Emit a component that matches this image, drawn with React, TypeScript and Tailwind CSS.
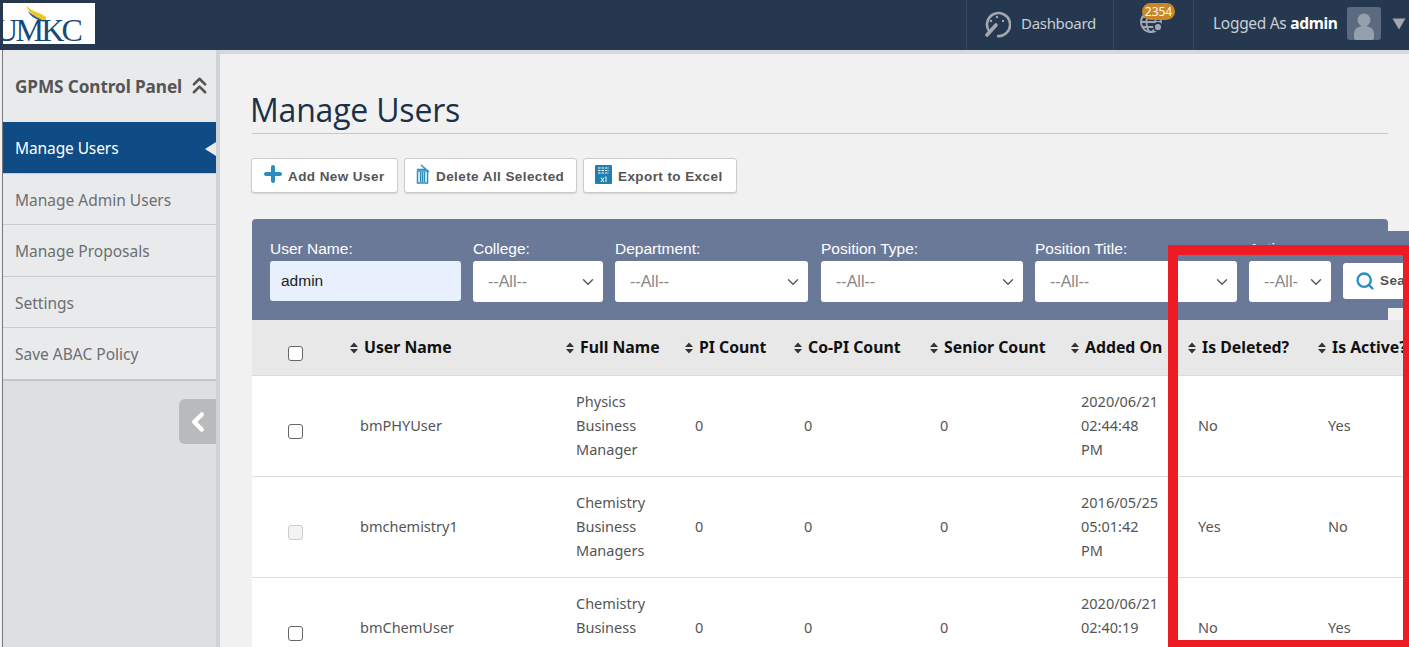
import React from "react";
import { ChevronDown, ChevronLeft, ChevronsUp, Plus, Search } from "lucide-react";

const font = { fontFamily: "Tahoma, 'Noto Sans', 'Open Sans', sans-serif" };
const arial = { fontFamily: "'Liberation Sans', Arial, sans-serif" };

function Sort() {
  return (
    <svg width="8" height="12" viewBox="0 0 8 12" className="shrink-0" fill="#333">
      <path d="M4 0.5 L8 5 H0 Z" />
      <path d="M4 11.5 L8 7 H0 Z" />
    </svg>
  );
}

function Filter({ label, w, value = "--All--", ml = "" }: { label: string; w: string; value?: string; ml?: string }) {
  return (
    <div className={`${w} ${ml} shrink-0`}>
      <div className="h-[20px] text-[15.5px] leading-[20px] text-white">{label}</div>
      <div className="mt-[2px] flex h-[41px] items-center justify-between rounded-[3px] bg-white pl-[15px] pr-[6px] text-[16px] text-[#888]">
        <span className="overflow-hidden whitespace-nowrap">{value}</span>
        <ChevronDown size={18} strokeWidth={1.8} color="#555" className="shrink-0" />
      </div>
    </div>
  );
}

const cols = "grid grid-cols-[98px_216px_119px_109px_136px_141px_117px_130px_100px]";

function Head({ t }: { t: string }) {
  return (
    <div className="flex items-center gap-[6px] whitespace-nowrap text-[15.8px] font-bold text-[#111]">
      <Sort />
      {t}
    </div>
  );
}

function Row({ u, name, date, del, act, disabled }: { u: string; name: string[]; date: string[]; del: string; act: string; disabled?: boolean }) {
  return (
    <div className={`${cols} h-[101px] items-center border-b border-[#dcdcdc] bg-white pb-[2px] text-[14.5px] leading-6 text-[#555]`}>
      <div className="pl-[36px] pt-[12px]">
        <div className={`h-[15px] w-[15px] rounded-[3px] border ${disabled ? "border-[#ccc] bg-[#f3f3f3]" : "border-[#666] bg-white"}`} />
      </div>
      <div className="pl-[10px]">{u}</div>
      <div className="pl-[10px]">{name.map((n) => <div key={n}>{n}</div>)}</div>
      <div className="pl-[10px]">0</div>
      <div className="pl-[10px]">0</div>
      <div className="pl-[10px]">0</div>
      <div className="pl-[10px]">{date.map((n) => <div key={n}>{n}</div>)}</div>
      <div className="pl-[10px]">{del}</div>
      <div className="pl-[10px]">{act}</div>
    </div>
  );
}

function Btn({ icon, label, w }: { icon: React.ReactNode; label: string; w: string }) {
  return (
    <div
      className={`${w} flex h-[35px] items-center gap-[6px] rounded-[3px] border border-[#ccc] bg-white pl-[11px] text-[13.5px] font-bold tracking-[0.42px] text-[#555] shadow-[0_1px_1px_rgba(0,0,0,0.12)]`}
      style={arial}
    >
      {icon}
      <span className="pt-[3px]">{label}</span>
    </div>
  );
}

const menu = [
  { t: "Manage Users", h: "h-[51px]" },
  { t: "Manage Admin Users", h: "h-[51px]" },
  { t: "Manage Proposals", h: "h-[52px]" },
  { t: "Settings", h: "h-[51px]" },
  { t: "Save ABAC Policy", h: "h-[52px]" },
];

export default function App() {
  return (
    <div className="relative flex h-[647px] w-[1409px] flex-col overflow-hidden bg-[#f1f1f1]" style={font}>
      <header className="flex h-[50px] shrink-0 items-stretch justify-between bg-[#263750] pl-[3px]">
        <div className="mt-[3px] h-[41px] w-[92px] overflow-hidden bg-white">
          <div className="relative h-full w-full">
            <svg width="92" height="41" viewBox="0 0 92 41" className="absolute left-0 top-0">
              <path d="M23 2 C27 8 36 9 43 14 L43 19 C35 14 26 12 23 2 Z" fill="#f2c81e" />
              <path d="M25 8 C30 13 37 15 42 19 L38 18 C32 16 27 13 25 8 Z" fill="#2d5f90" />
            </svg>
            <div className="absolute -left-[8px] top-[9px] whitespace-nowrap text-[32px] leading-[36px] tracking-[-2.7px] text-[#15497c]" style={{ fontFamily: "'Liberation Serif', serif" }}>
              UMKC
            </div>
          </div>
        </div>
        <div className="flex items-stretch text-[#c9ced6]">
          <div className="flex w-[147px] items-center gap-[8px] border-l border-[#35465f] pb-[3px] pl-[18px] text-[15px] tracking-[-0.3px]">
            <svg width="28" height="28" viewBox="0 0 28 28" fill="none" stroke="#a3a8b0" strokeWidth="2.6" className="-ml-[2px] mr-[2px]">
              <path d="M6 21 A11.5 11.5 0 1 1 14 26" />
              <path d="M4 25 L13 15" strokeWidth="3.6" strokeLinecap="round" />
              <circle cx="14" cy="7" r="1.2" fill="#a3a8b0" stroke="none" />
              <circle cx="8" cy="11" r="1.2" fill="#a3a8b0" stroke="none" />
              <circle cx="20" cy="11" r="1.2" fill="#a3a8b0" stroke="none" />
            </svg>
            Dashboard
          </div>
          <div className="relative w-[80px] border-l border-[#35465f]">
            <svg width="26" height="26" viewBox="0 0 26 26" fill="none" stroke="#a3a8b0" strokeWidth="1.8" className="absolute left-[25px] top-[9px]">
              <circle cx="12" cy="13" r="10" />
              <ellipse cx="12" cy="13" rx="4.5" ry="10" />
              <path d="M2 13 H22 M3.5 8 H20.5 M3.5 18 H20.5" />
              <circle cx="19" cy="18" r="4" fill="#a3a8b0" stroke="#263750" />
            </svg>
            <div className="absolute left-[28px] top-[3px] flex h-[17px] w-[33px] items-center justify-center rounded-full bg-[#c9862a] text-[12px] text-white">2354</div>
          </div>
          <div className="flex w-[216px] items-center border-l border-[#35465f] pb-[3px] pl-[19px] text-[15.5px] tracking-[-0.3px]">
            <span className="whitespace-nowrap">
              Logged As <b className="text-white">admin</b>
            </span>
            <div className="ml-[9px] flex h-[33px] w-[34px] items-end justify-center overflow-hidden rounded-[3px] bg-[#5c6a80]">
              <svg width="22" height="28" viewBox="0 0 22 28" fill="#95a0af">
                <circle cx="11" cy="8" r="6.5" />
                <path d="M1 26 V22 C1 16 6 14 11 14 C16 14 21 16 21 22 V26 Q21 28 18 28 H4 Q1 28 1 26 Z" />
              </svg>
            </div>
            <svg width="14" height="12" viewBox="0 0 14 12" fill="#a3a8b0" className="ml-[11px]">
              <path d="M0.5 0.5 H13.5 L7 11.5 Z" />
            </svg>
          </div>
        </div>
      </header>

      <div className="flex min-h-0 flex-1">
        <aside className="w-[220px] shrink-0 border-l-2 border-r-4 border-l-[#f0f0f0] border-r-[#cfd4d8]">
          <div className="relative h-full border-l border-[#777] bg-[#dddfe2]">
            <div className="flex h-[72px] items-center gap-[6px] bg-[#e9eaec] pl-[12px] pt-[2px] text-[17.2px] font-bold text-[#555]">
              <span className="whitespace-nowrap tracking-[-0.1px]">GPMS Control Panel</span>
              <ChevronsUp size={27} strokeWidth={2.3} color="#555" className="-ml-[2px] -mt-[4px] shrink-0" />
            </div>
            <div className="border-b-[2px] border-[#c4c6c9]">
              {menu.map((m, i) => (
                <div
                  key={m.t}
                  className={
                    i === 0
                      ? `relative flex ${m.h} items-center bg-[#0f4b84] pl-[12px] pt-[2px] text-[15.5px] tracking-[-0.1px] text-white`
                      : `flex ${m.h} items-center border-t border-[#c9cbce] bg-[#e9eaec] pl-[12px] pt-[3px] text-[15.5px] text-[#6c6f73]`
                  }
                >
                  {m.t}
                  {i === 0 && (
                    <span className="absolute right-0 top-[20px] h-0 w-0 border-y-[7px] border-r-[11px] border-y-transparent border-r-[#e9eaec]" />
                  )}
                </div>
              ))}
            </div>
            <div className="absolute right-0 top-[349px] flex h-[45px] w-[37px] items-center justify-center rounded-l-[6px] bg-[#b9babc]">
              <ChevronLeft size={30} strokeWidth={3.6} color="#fff" />
            </div>
          </div>
        </aside>

        <main className="min-w-0 flex-1 overflow-hidden border-t-4 border-[#d3d9de] pl-[32px] pt-[28px]">
          <h1 className="h-[52px] w-[1136px] border-b border-[#c8c8c8] pt-[5px] text-[32px] leading-[46px] tracking-[-0.2px] text-[#1c3148]" style={{ fontFamily: "'Open Sans', sans-serif" }}>
            <span className="-ml-[2px]">Manage Users</span>
          </h1>
          <div className="-ml-px mt-[24px] flex gap-[6px]">
            <Btn w="w-[147px]" label="Add New User" icon={<Plus size={24} strokeWidth={4} color="#2a8fc0" className="-ml-[2px] -mr-[3px] -mt-[3px]" />} />
            <Btn
              w="w-[173px]"
              label="Delete All Selected"
              icon={
                <svg width="14" height="20" viewBox="0 0 14 20" fill="none" stroke="#2a8fc0" strokeWidth="1.5" className="-mt-[3px]">
                  <path d="M1.5 7 H11.5 V19 H1.5 Z M4.5 8 V18 M6.5 8 V18 M8.5 8 V18" />
                  <path d="M1 5.5 H10 M5 1 L13 8" />
                </svg>
              }
            />
            <Btn
              w="w-[154px]"
              label="Export to Excel"
              icon={
                <svg width="17" height="19" viewBox="0 0 17 19" className="-mt-[3px]">
                  <rect width="17" height="19" rx="1" fill="#1f7fae" />
                  <path d="M3 3 H14 M3 5.5 H14 M3 8 H14" stroke="#fff" strokeWidth="1.2" strokeDasharray="2.5 1" />
                  <path d="M6 12.5 L9 17 M9 12.5 L6 17 M11 11.5 V17" stroke="#fff" strokeWidth="1" fill="none" />
                </svg>
              }
            />
          </div>

          <div className="mt-[26px] h-[101px] w-[1136px] rounded-t-[4px] bg-[#6b7999] py-[12px]" style={arial}>
            <div className="flex h-[77px] w-[1200px] items-start bg-[#6b7999] pl-[18px] pt-[8px]">
              <div className="w-[191px] shrink-0">
                <div className="h-[20px] text-[15.5px] leading-[20px] text-white">User Name:</div>
                <div className="mt-[2px] flex h-[40px] items-center rounded-[3px] bg-[#e8f0fe] pl-[11px] text-[15.5px] text-[#222]">admin</div>
              </div>
              <Filter label="College:" w="w-[130px]" ml="ml-[12px]" />
              <Filter label="Department:" w="w-[193px]" ml="ml-[12px]" />
              <Filter label="Position Type:" w="w-[202px]" ml="ml-[13px]" />
              <Filter label="Position Title:" w="w-[202px]" ml="ml-[12px]" />
              <Filter label="Active:" w="w-[82px]" ml="ml-[12px]" value="--All-" />
              <div className="ml-[12px] mt-[24px] flex h-[36px] w-[90px] shrink-0 items-center gap-[5px] rounded-[3px] bg-white pl-[12px] text-[13.5px] font-bold tracking-[0.42px] text-[#555]">
                <Search size={20} strokeWidth={2.8} color="#2a8fc0" />
                Search
              </div>
            </div>
          </div>

          <div className="w-[1250px]">
            <div className={`${cols} h-[56px] items-center border-b border-[#dcdcdc] bg-[#e8e8e9]`}>
              <div className="pl-[36px] pt-[12px]">
                <div className="h-[15px] w-[15px] rounded-[3px] border border-[#666] bg-white" />
              </div>
              <Head t="User Name" />
              <Head t="Full Name" />
              <Head t="PI Count" />
              <Head t="Co-PI Count" />
              <Head t="Senior Count" />
              <Head t="Added On" />
              <Head t="Is Deleted?" />
              <Head t="Is Active?" />
            </div>
            <Row u="bmPHYUser" name={["Physics", "Business", "Manager"]} date={["2020/06/21", "02:44:48", "PM"]} del="No" act="Yes" />
            <Row u="bmchemistry1" name={["Chemistry", "Business", "Managers"]} date={["2016/05/25", "05:01:42", "PM"]} del="Yes" act="No" disabled />
            <Row u="bmChemUser" name={["Chemistry", "Business", "Manager"]} date={["2020/06/21", "02:40:19", "PM"]} del="No" act="Yes" />
          </div>
        </main>
      </div>

      <div className="pointer-events-none absolute left-[1168px] top-[245px] h-[402px] w-[245px] border-x-[10px] border-t-[10px] border-b-[7px] border-[#ed1c24]" />
    </div>
  );
}
